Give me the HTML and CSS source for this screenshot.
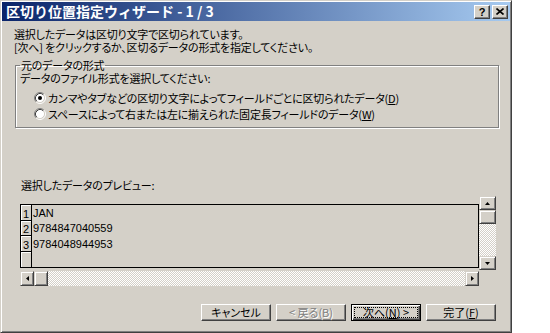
FILE: index.html
```html
<!DOCTYPE html>
<html lang="ja">
<head>
    <meta charset="UTF-8">
    <title>区切り位置指定ウィザード</title>
    <link rel="stylesheet" href="styles.css">
</head>
<body>
    <div class="dialog">
        <div class="titlebar">
            <span class="title">区切り位置指定ウィザード - 1 / 3</span>
            <div class="title-buttons">
                <span class="tbtn help">?</span>
                <span class="tbtn">
                    <svg width="8" height="7" viewBox="0 0 8 7"><path d="M0.5 0.5 L7.5 6.5 M7.5 0.5 L0.5 6.5" stroke="#000" stroke-width="1.6"/></svg>
                </span>
            </div>
        </div>

        <div class="content">
            <p class="intro">選択したデータは区切り文字で区切られています。<br>[次へ] をクリックするか、区切るデータの形式を指定してください。</p>

            <fieldset class="group">
                <legend>元のデータの形式</legend>
                <p>データのファイル形式を選択してください:</p>
                <label class="radio">
                    <svg width="12" height="12" viewBox="0 0 12 12">
                        <circle cx="6" cy="6" r="4.5" fill="#fff"/>
                        <path d="M2.11 9.89 A5.5 5.5 0 0 1 9.89 2.11" stroke="#808080" fill="none"/>
                        <path d="M9.89 2.11 A5.5 5.5 0 0 1 2.11 9.89" stroke="#fff" fill="none"/>
                        <path d="M2.82 9.18 A4.5 4.5 0 0 1 9.18 2.82" stroke="#404040" fill="none"/>
                        <path d="M9.18 2.82 A4.5 4.5 0 0 1 2.82 9.18" stroke="#d4d0c8" fill="none"/>
                        <circle cx="6" cy="6" r="2" fill="#000"/>
                    </svg>
                    <span>カンマやタブなどの区切り文字によってフィールドごとに区切られたデータ(<u>D</u>)</span>
                </label>
                <label class="radio">
                    <svg width="12" height="12" viewBox="0 0 12 12">
                        <circle cx="6" cy="6" r="4.5" fill="#fff"/>
                        <path d="M2.11 9.89 A5.5 5.5 0 0 1 9.89 2.11" stroke="#808080" fill="none"/>
                        <path d="M9.89 2.11 A5.5 5.5 0 0 1 2.11 9.89" stroke="#fff" fill="none"/>
                        <path d="M2.82 9.18 A4.5 4.5 0 0 1 9.18 2.82" stroke="#404040" fill="none"/>
                        <path d="M9.18 2.82 A4.5 4.5 0 0 1 2.82 9.18" stroke="#d4d0c8" fill="none"/>
                    </svg>
                    <span>スペースによって右または左に揃えられた固定長フィールドのデータ(<u>W</u>)</span>
                </label>
            </fieldset>

            <p class="preview-label">選択したデータのプレビュー:</p>

            <div class="preview">
                <div class="preview-row">
                    <div class="grid">
                        <div class="num">1</div><div class="cell">JAN</div>
                        <div class="num">2</div><div class="cell">9784847040559</div>
                        <div class="num">3</div><div class="cell">9784048944953</div>
                        <div class="num"></div><div class="cell"></div>
                    </div>
                    <div class="vscroll">
                        <span class="sbtn">
                            <svg width="5" height="3" viewBox="0 0 5 3"><path d="M2.5 0 L5 3 L0 3 Z" fill="#000"/></svg>
                        </span>
                        <span class="sbtn thumb"></span>
                        <span class="track"></span>
                        <span class="sbtn">
                            <svg width="5" height="3" viewBox="0 0 5 3"><path d="M0 0 L5 0 L2.5 3 Z" fill="#000"/></svg>
                        </span>
                    </div>
                </div>
                <div class="hscroll">
                    <span class="sbtn">
                        <svg width="3" height="5" viewBox="0 0 3 5"><path d="M3 0 L3 5 L0 2.5 Z" fill="#000"/></svg>
                    </span>
                    <span class="sbtn thumb"></span>
                    <span class="track"></span>
                    <span class="sbtn">
                        <svg width="3" height="5" viewBox="0 0 3 5"><path d="M0 0 L3 2.5 L0 5 Z" fill="#000"/></svg>
                    </span>
                </div>
            </div>
        </div>

        <div class="buttons">
            <button class="btn">キャンセル</button>
            <button class="btn back" disabled>&lt; 戻る(B)</button>
            <button class="btn default"><span class="focus">次へ(<u>N</u>) &gt;</span></button>
            <button class="btn">完了(<u>F</u>)</button>
        </div>
    </div>
</body>
</html>
```

FILE: styles.css
```css
body {
    margin: 0;
    background: #fff;
    font-family: "Noto Sans CJK JP", "Liberation Sans", sans-serif;
    font-size: 11px;
    color: #000;
}

p {
    margin: 0;
}

.dialog {
    width: 512px;
    height: 333px;
    box-sizing: border-box;
    background: #d4d0c8;
    border: 1px solid;
    border-color: #d4d0c8 #404040 #404040 #d4d0c8;
    box-shadow: inset 1px 1px #fff, inset -1px -1px #808080;
    padding: 1px;
    display: flex;
    flex-direction: column;
}

.titlebar {
    height: 19px;
    display: flex;
    align-items: center;
    justify-content: space-between;
    background: linear-gradient(to right, #0a246a, #a6caf0);
    padding-left: 4px;
}

.title {
    color: #fff;
    font-weight: bold;
    font-size: 14px;
    line-height: 19px;
    white-space: nowrap;
}

.title-buttons {
    display: flex;
    gap: 2px;
    margin-right: 2px;
}

.tbtn {
    width: 16px;
    height: 14px;
    box-sizing: border-box;
    background: #d4d0c8;
    border: 1px solid;
    border-color: #fff #404040 #404040 #fff;
    box-shadow: inset -1px -1px #808080;
    display: flex;
    align-items: center;
    justify-content: center;
}

.tbtn.help {
    font-family: "Liberation Sans", sans-serif;
    font-weight: bold;
    font-size: 11px;
    line-height: 12px;
}

.content {
    padding: 7px 0 0 12px;
    font-feature-settings: "palt";
    letter-spacing: -0.2px;
    line-height: 13px;
}

.group {
    margin: 5px 0 0 1px;
    width: 484px;
    box-sizing: border-box;
    padding: 0 0 5px 4px;
    border: 1px solid #808080;
    box-shadow: 1px 1px #fff, inset 1px 1px #fff;
}

.group legend {
    padding: 0 1px;
    line-height: 13px;
}

.radio {
    display: flex;
    align-items: center;
    height: 16px;
    margin-left: 14px;
    gap: 2px;
}

.radio:first-of-type {
    margin-top: 5px;
}

.preview-label {
    margin: 51px 0 0 7px;
}

.preview {
    margin: 4px 0 0 6px;
}

.preview-row {
    display: flex;
    align-items: flex-start;
}

.grid {
    margin-top: 8px;
    width: 459px;
    height: 64px;
    box-sizing: border-box;
    border: 1px solid #000;
    display: grid;
    grid-template-columns: 11px 1fr;
    grid-template-rows: repeat(4, 1fr);
    font-family: "Liberation Sans", sans-serif;
    font-size: 11px;
    line-height: 11px;
    letter-spacing: 0;
}

.num {
    border-right: 1px solid #000;
    border-bottom: 1px solid #000;
    box-shadow: inset 1px 1px #fff;
    display: flex;
    align-items: flex-end;
    padding-left: 2px;
}

.num:nth-last-child(2) {
    border-bottom: none;
}

.cell {
    display: flex;
    align-items: flex-end;
    padding: 0 0 2px 1px;
}

.vscroll {
    width: 17px;
    height: 74px;
    display: flex;
    flex-direction: column;
}

.vscroll .sbtn {
    height: 14px;
}

.hscroll {
    margin-top: 1px;
    width: 459px;
    height: 15px;
    display: flex;
}

.hscroll .sbtn {
    width: 14px;
}

.sbtn {
    box-sizing: border-box;
    background: #d4d0c8;
    border: 1px solid;
    border-color: #d4d0c8 #404040 #404040 #d4d0c8;
    box-shadow: inset 1px 1px #fff, inset -1px -1px #808080;
    display: flex;
    align-items: center;
    justify-content: center;
}

.track {
    flex: 1;
    background: repeating-conic-gradient(#fff 0 25%, #d4d0c8 0 50%) 0 0 / 2px 2px;
}

.buttons {
    margin-top: auto;
    display: flex;
    justify-content: flex-end;
    gap: 5px;
    padding: 0 14px 10px 0;
}

.btn {
    width: 70px;
    height: 17px;
    padding: 0;
    box-sizing: border-box;
    background: #d4d0c8;
    font-family: "Noto Sans CJK JP", "Liberation Sans", sans-serif;
    font-feature-settings: "palt";
    font-size: 11px;
    line-height: 13px;
    color: #000;
    border: 1px solid;
    border-color: #fff #404040 #404040 #fff;
    box-shadow: inset -1px -1px #808080;
    display: flex;
    align-items: center;
    justify-content: center;
}

.back {
    color: #808080;
    text-shadow: 1px 1px #fff;
}

.btn.default {
    border: 1px solid #000;
    box-shadow: inset 1px 1px #fff, inset -1px -1px #404040, inset -2px -2px #808080;
}

.focus {
    flex: 1;
    align-self: stretch;
    margin: 3px;
    outline: 1px dotted #000;
    display: flex;
    align-items: center;
    justify-content: center;
}
```
